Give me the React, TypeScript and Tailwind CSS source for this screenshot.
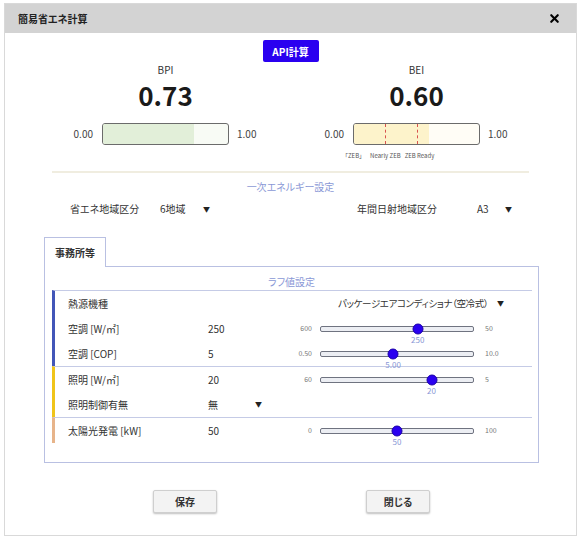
import { X } from "lucide-react"

const jp = { fontFamily: '"Noto Sans CJK JP", "Noto Sans", sans-serif' }

type Gauge = { title: string; value: number; fill: string; rest: string; marks?: number[] }

function GaugeBlock({ g }: { g: Gauge }) {
  return (
    <div className="grid grid-cols-[40px_127px_40px]">
      <div />
      <div className="text-center text-[10px] leading-[12px] text-[#333]">{g.title}</div>
      <div />
      <div />
      <div className="mt-[4px] text-center text-[26px] font-bold leading-[30px] text-[#1a1a1a]">
        {g.value.toFixed(2)}
      </div>
      <div />
      <div className="mt-[13px] pr-[9px] text-right text-[10px] leading-[22px] text-[#444]">0.00</div>
      <div
        className="relative mt-[13px] h-[22px] overflow-hidden rounded-[3px] border border-[#6b6b6b]"
        style={{ background: g.rest }}
      >
        <div className="absolute inset-y-0 left-0" style={{ width: `${g.value * 100}%`, background: g.fill }} />
        {g.marks?.map((m) => (
          <div
            key={m}
            className="absolute inset-y-0 border-l border-dashed border-[#d9534f]"
            style={{ left: `${m * 100}%` }}
          />
        ))}
      </div>
      <div className="mt-[13px] pl-[8px] text-[10px] leading-[22px] text-[#444]">1.00</div>
      <div />
      <div className="mt-[6px] h-[9px]">
        {g.marks && (
          <div className="-ml-[8px] flex gap-[8px] text-[6px] leading-[9px] text-[#555]">
            <span>「ZEB」</span>
            <span>Nearly ZEB</span>
            <span className="-ml-[4px]">ZEB Ready</span>
          </div>
        )}
      </div>
      <div />
    </div>
  )
}

function Caret() {
  return <span className="text-[7px] text-[#222]">▼</span>
}

type SliderRow = { label: string; value: string; min: string; max: string; pos: number; shown: string }

function Slider({ r }: { r: SliderRow }) {
  return (
    <div className="flex items-center">
      <span className="w-[24px] text-right text-[7px] text-[#777]">{r.min}</span>
      <div className="relative ml-[8px] h-[6px] w-[154px] rounded-[2px] border border-[#6f7380] bg-[#eceef3]">
        <div
          className="absolute top-1/2 h-[11px] w-[11px] -translate-x-1/2 -translate-y-1/2 rounded-full border border-[#1a00a8] bg-[#2a00f0]"
          style={{ left: `${r.pos * 100}%` }}
        />
        <span
          className="absolute top-[8px] -translate-x-1/2 text-[8px] leading-[9px] text-[#8a98d6]"
          style={{ left: `${r.pos * 100}%` }}
        >
          {r.shown}
        </span>
      </div>
      <span className="ml-[11px] text-[7px] text-[#777]">{r.max}</span>
    </div>
  )
}

function Row({ r }: { r: SliderRow }) {
  return (
    <div className="grid h-[25px] grid-cols-[140px_80px_1fr] items-center pl-[13px] text-[10px] text-[#333]">
      <span>{r.label}</span>
      <span>{r.value}</span>
      <Slider r={r} />
    </div>
  )
}

const hvac: SliderRow[] = [
  { label: "空調 [W/㎡]", value: "250", min: "600", max: "50", pos: 0.636, shown: "250" },
  { label: "空調 [COP]", value: "5", min: "0.50", max: "10.0", pos: 0.474, shown: "5.00" },
]
const light: SliderRow = { label: "照明 [W/㎡]", value: "20", min: "60", max: "5", pos: 0.727, shown: "20" }
const solar: SliderRow = { label: "太陽光発電 [kW]", value: "50", min: "0", max: "100", pos: 0.5, shown: "50" }

export default function App() {
  return (
    <div className="h-[539px] w-[581px] bg-white px-[4px] pt-[3px] [font-feature-settings:'palt']" style={jp}>
      <div className="flex h-[533px] flex-col border border-[#d9d9d9]">
        {/* title bar */}
        <div className="flex h-[29px] shrink-0 items-center justify-between bg-[#d3d3d3] pl-[13px] pr-[15px]">
          <span className="text-[10px] font-bold text-[#222]">簡易省エネ計算</span>
          <X className="h-[13px] w-[13px] text-black" strokeWidth={4} />
        </div>

        <div className="flex flex-col">
          <button className="mx-auto mt-[7px] h-[22px] w-[56px] rounded-[2px] bg-[#2a00f0] text-[10px] font-bold text-white">
            API計算
          </button>

          <div className="mt-[2px] flex gap-[44px] pl-[57px]">
            <GaugeBlock g={{ title: "BPI", value: 0.73, fill: "#e2efd9", rest: "#f8fbf5" }} />
            <GaugeBlock g={{ title: "BEI", value: 0.6, fill: "#fdf3cb", rest: "#fffdf6", marks: [0.25, 0.5] }} />
          </div>

          <div className="mx-[47px] mt-[11px] h-[2px] bg-[#f0ede0]" />

          <div className="mt-[7px] text-center text-[10px] leading-[14px] text-[#8a98d6]">一次エネルギー設定</div>

          <div className="mt-[7px] flex items-center pl-[65px] text-[10px] leading-[16px] text-[#333]">
            <div className="flex w-[287px] items-center">
              <span className="w-[90px]">省エネ地域区分</span>
              <span className="w-[43px]">6地域</span>
              <Caret />
            </div>
            <span className="w-[120px]">年間日射地域区分</span>
            <span className="w-[28px]">A3</span>
            <Caret />
          </div>

          {/* tab + panel */}
          <div className="ml-[39px] mt-[20px] w-[495px]">
            <div className="relative z-10 -mb-px flex h-[30px] w-[62px] items-center border border-b-0 border-[#b9c0e2] bg-white pl-[10px] text-[10px] font-bold text-[#333]">
              事務所等
            </div>
            <div className="border border-[#b9c0e2] pb-[19px] pt-[7px]">
              <div className="mb-[1px] text-center text-[10px] leading-[15px] text-[#8a98d6]">ラフ値設定</div>
              <div className="ml-[7px] mr-[6px]">
                <div className="border-l-[3px] border-t border-l-[#4256b8] border-t-[#c5cbe6]">
                  <div className="grid h-[25px] grid-cols-[140px_80px_1fr] items-center pl-[13px] text-[10px] text-[#333]">
                    <span>熱源機種</span>
                    <span />
                    <div className="flex items-center gap-[9px] pl-[50px]">
                      <span className="shrink-0 whitespace-nowrap text-[9.5px] tracking-[-0.4px]">
                        パッケージエアコンディショナ（空冷式）
                      </span>
                      <Caret />
                    </div>
                  </div>
                  {hvac.map((r) => (
                    <Row key={r.label} r={r} />
                  ))}
                </div>
                <div className="border-l-[3px] border-t border-l-[#f0c419] border-t-[#c5cbe6]">
                  <Row r={light} />
                  <div className="grid h-[25px] grid-cols-[140px_80px_1fr] items-center pl-[13px] text-[10px] text-[#333]">
                    <span>照明制御有無</span>
                    <div className="flex items-center">
                      <span className="w-[47px]">無</span>
                      <Caret />
                    </div>
                    <span />
                  </div>
                </div>
                <div className="border-l-[3px] border-t border-l-[#e7b48a] border-t-[#c5cbe6]">
                  <Row r={solar} />
                </div>
              </div>
            </div>
          </div>

          <div className="mt-[27px] flex gap-[149px] pl-[148px]">
            {["保存", "閉じる"].map((t) => (
              <button
                key={t}
                className="h-[23px] w-[64px] rounded-[2px] border border-[#cfcfcf] bg-[#f3f3f3] text-[10px] font-bold text-[#333] shadow-[0_1px_2px_rgba(0,0,0,0.25)]"
              >
                {t}
              </button>
            ))}
          </div>
        </div>
      </div>
    </div>
  )
}
